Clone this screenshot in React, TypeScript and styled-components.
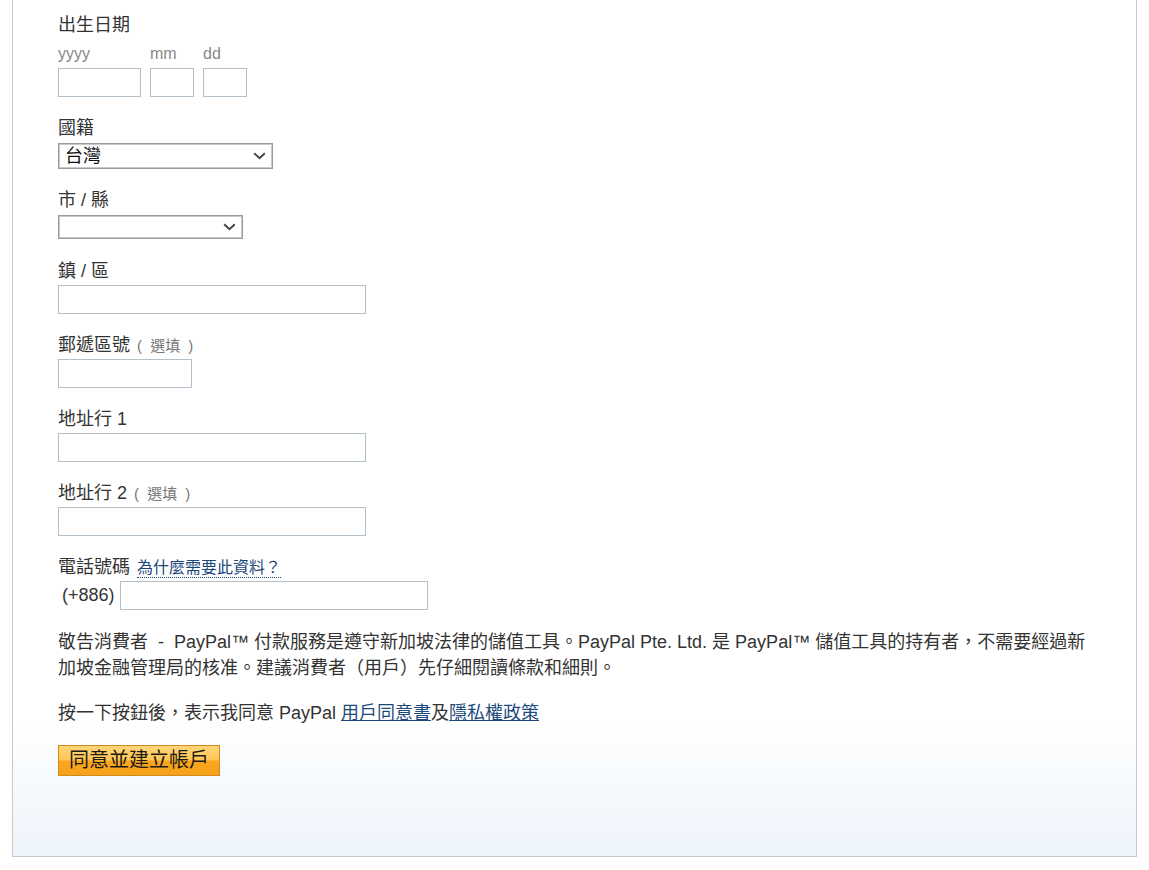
import styled, { createGlobalStyle } from 'styled-components';

const GlobalStyle = createGlobalStyle`
  *, *::before, *::after { box-sizing: border-box; }
  body {
    margin: 0;
    background: #fff;
    font-family: "Liberation Sans", "Noto Sans CJK TC", sans-serif;
    color: #333;
  }
`;

const Panel = styled.div`
  margin-left: 12px;
  width: 1125px;
  border: 1px solid #c9c9c9;
  border-top: none;
  background: linear-gradient(180deg, #fff 0%, #fff 84%, #edf4fb 100%);
  padding: 14px 0 80px 45px;
`;

const Field = styled.div<{ $gap?: number }>`
  display: flex;
  flex-direction: column;
  align-items: flex-start;
  margin-bottom: ${p => p.$gap ?? 20}px;
`;

const Label = styled.label`
  display: flex;
  align-items: baseline;
  font-size: 18px;
  line-height: 22px;
  height: 22px;
  margin-bottom: 3px;
  color: #333;
  white-space: nowrap;
`;

const Optional = styled.span`
  font-size: 15px;
  color: #777;
  margin-left: 7px;
  word-spacing: 4px;
  white-space: pre;
`;

const HelpLink = styled.a`
  font-size: 16px;
  color: #1b4679;
  text-decoration: none;
  border-bottom: 1px dotted #1b4679;
  line-height: 18px;
  margin-left: 7px;
  cursor: help;
`;

const TextInput = styled.input<{ $w: number }>`
  width: ${p => p.$w}px;
  height: 29px;
  border: 1px solid #b5c1ca;
  padding: 0 6px;
  font: inherit;
  font-size: 16px;
  background: #fff;
  outline: none;
`;

const DateRow = styled.div`
  display: flex;
  gap: 9px;
  margin-top: 4px;
`;

const DatePart = styled.div`
  display: flex;
  flex-direction: column;
`;

const SubLabel = styled.span`
  font-size: 16px;
  line-height: 22px;
  color: #888;
  margin-bottom: 3px;
`;

const SelectBox = styled.div<{ $w: number; $h: number }>`
  position: relative;
  width: ${p => p.$w}px;
  height: ${p => p.$h}px;
  margin-top: 1px;
`;

const NativeSelect = styled.select`
  appearance: none;
  width: 100%;
  height: 100%;
  border: 1px solid #9a9a9a;
  box-shadow: inset 0 0 0 1px #c9c9c9;
  border-radius: 0;
  background: #fff;
  padding: 0 26px 0 6px;
  font-family: inherit;
  font-size: 18px;
  color: #111;
  outline: none;
`;

const Chevron = styled.svg`
  position: absolute;
  right: 7px;
  top: 50%;
  transform: translateY(-50%);
  pointer-events: none;
`;

const PhoneRow = styled.div`
  display: flex;
  align-items: center;
  gap: 5px;
`;

const Prefix = styled.span`
  font-size: 18px;
  margin-left: 4px;
  color: #333;
`;

const Notice = styled.p`
  margin: 19px 0 0;
  max-width: 1040px;
  font-size: 18px;
  line-height: 26px;
  color: #333;
`;

const Consent = styled.p`
  margin: 19px 0 0;
  font-size: 18px;
  line-height: 26px;
  color: #333;
`;

const PolicyLink = styled.a`
  color: #1d4a7c;
  text-decoration: underline;
`;

const SubmitButton = styled.button`
  display: block;
  margin-top: 19px;
  height: 31px;
  padding: 0 10px;
  border: 1px solid #d08a1f;
  background: linear-gradient(180deg, #ffd67a 0%, #ffc653 48%, #f9a61e 52%, #f6a11a 100%);
  font-family: inherit;
  font-size: 20px;
  line-height: 29px;
  color: #1e1a14;
  cursor: pointer;
`;

const Select = ({ w, h, value }: { w: number; h: number; value?: string }) => (
  <SelectBox $w={w} $h={h}>
    <NativeSelect defaultValue={value ?? ''}>
      {value ? <option value={value}>{value}</option> : <option value="" />}
    </NativeSelect>
    <Chevron width="13" height="8" viewBox="0 0 13 8">
      <path d="M1.2 1.2 L6.5 6.3 L11.8 1.2" fill="none" stroke="#444" strokeWidth="1.9" />
    </Chevron>
  </SelectBox>
);

export default function App() {
  return (
    <>
      <GlobalStyle />
      <Panel>
        <Field>
          <Label>出生日期</Label>
          <DateRow>
            <DatePart>
              <SubLabel>yyyy</SubLabel>
              <TextInput $w={83} />
            </DatePart>
            <DatePart>
              <SubLabel>mm</SubLabel>
              <TextInput $w={44} />
            </DatePart>
            <DatePart>
              <SubLabel>dd</SubLabel>
              <TextInput $w={44} />
            </DatePart>
          </DateRow>
        </Field>

        <Field>
          <Label>國籍</Label>
          <Select w={215} h={26} value="台灣" />
        </Field>

        <Field $gap={21}>
          <Label>市 / 縣</Label>
          <Select w={185} h={24} />
        </Field>

        <Field>
          <Label>鎮 / 區</Label>
          <TextInput $w={308} />
        </Field>

        <Field>
          <Label>
            郵遞區號<Optional>( 選填 )</Optional>
          </Label>
          <TextInput $w={134} />
        </Field>

        <Field>
          <Label>地址行 1</Label>
          <TextInput $w={308} />
        </Field>

        <Field>
          <Label>
            地址行 2<Optional>( 選填 )</Optional>
          </Label>
          <TextInput $w={308} />
        </Field>

        <Field $gap={0}>
          <Label>
            電話號碼<HelpLink href="#">為什麼需要此資料？</HelpLink>
          </Label>
          <PhoneRow>
            <Prefix>(+886)</Prefix>
            <TextInput $w={308} />
          </PhoneRow>
        </Field>

        <Notice>
          敬告消費者 &nbsp;-&nbsp; PayPal™ 付款服務是遵守新加坡法律的儲值工具。PayPal Pte. Ltd. 是 PayPal™
          儲值工具的持有者，不需要經過新加坡金融管理局的核准。建議消費者（用戶）先仔細閱讀條款和細則。
        </Notice>

        <Consent>
          按一下按鈕後，表示我同意 PayPal <PolicyLink href="#">用戶同意書</PolicyLink>及
          <PolicyLink href="#">隱私權政策</PolicyLink>
        </Consent>

        <SubmitButton type="button">同意並建立帳戶</SubmitButton>
      </Panel>
    </>
  );
}
